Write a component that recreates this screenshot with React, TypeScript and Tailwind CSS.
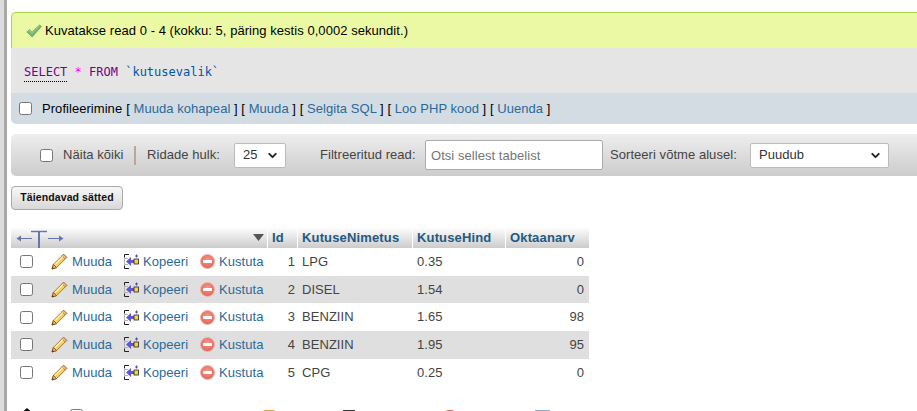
import type { ReactNode } from 'react';
import { ChevronDown } from 'lucide-react';

const rows = [
  { id: 1, name: 'LPG', price: '0.35', octane: 0 },
  { id: 2, name: 'DISEL', price: '1.54', octane: 0 },
  { id: 3, name: 'BENZIIN', price: '1.65', octane: 98 },
  { id: 4, name: 'BENZIIN', price: '1.95', octane: 95 },
  { id: 5, name: 'CPG', price: '0.25', octane: 0 },
];

function Check() {
  return (
    <svg width="16" height="14" viewBox="0 0 16 14" className="shrink-0">
      <path d="M0.8 8l2.6-2.4 2.6 2.6L13.4 1l2 1.4L6.2 13z" fill="#74b56f" stroke="#5a9a58" strokeWidth="0.6" />
      <path d="M1.8 8l1.6-1.4 2.6 3L13.4 2" fill="none" stroke="#a5d6a0" strokeWidth="0.8" />
    </svg>
  );
}

function Pencil() {
  return (
    <svg width="17" height="17" viewBox="0 0 17 17" className="shrink-0">
      <path d="M12.6 1.2l3.2 3.2L5.6 14.6 1 16l1.4-4.6z" fill="#f5cf5b" stroke="#a8792c" strokeWidth="1" />
      <path d="M12.6 1.2l3.2 3.2-1.6 1.6-3.2-3.2z" fill="#e9b7a0" stroke="#a8792c" strokeWidth="0.8" />
      <path d="M4 11.5L12 3.5" stroke="#fdf1bd" strokeWidth="1.2" />
      <path d="M1 16l1.4-4.6 3.2 3.2z" fill="#e2b98a" stroke="#7a4a1c" strokeWidth="0.8" />
      <path d="M1 16l.6-2 1.4 1.4z" fill="#4a2c10" />
    </svg>
  );
}

function Copy() {
  return (
    <svg width="15" height="17" viewBox="0 0 15 17" className="shrink-0">
      <path d="M5 1.5H.5v3M.5 12.5v3H5" fill="none" stroke="#222" strokeWidth="1" />
      <path d="M.5 5v7M1 5.5h3M1 11.5h3" fill="none" stroke="#b5b5b5" strokeWidth="1" />
      <path d="M2 8.5L7 4v3h3v3H7v3z" fill="#5f55d8" />
      <rect x="10" y="6" width="4.5" height="5" fill="#f6d24a" stroke="#222" strokeWidth="0.8" />
      <path d="M12.5 1.5v3M11 3h3" stroke="#4a4ac8" strokeWidth="1" />
    </svg>
  );
}

function Stop() {
  return (
    <svg width="15" height="15" viewBox="0 0 15 15" className="shrink-0">
      <defs>
        <radialGradient id="stop-fill" cx="50%" cy="40%" r="60%">
          <stop offset="0%" stopColor="#f49a8c" />
          <stop offset="100%" stopColor="#e0625a" />
        </radialGradient>
      </defs>
      <circle cx="7.5" cy="7.5" r="7" fill="url(#stop-fill)" stroke="#efb3aa" strokeWidth="1" />
      <rect x="3" y="6" width="9" height="3" rx="0.5" fill="#fff" />
    </svg>
  );
}

function SizeArrows() {
  return (
    <svg width="52" height="20" viewBox="0 0 52 20">
      <g fill="#6a74ac" stroke="#6a74ac">
        <path d="M5 10.5h11" fill="none" />
        <path d="M0.5 10.5L5 7.5v6z" stroke="none" />
        <path d="M15 3.5h16" fill="none" strokeWidth="1.5" />
        <path d="M23 3.5V20" fill="none" strokeWidth="2" />
        <path d="M32 10.5h11" fill="none" />
        <path d="M47.5 10.5L43 7.5v6z" stroke="none" />
      </g>
    </svg>
  );
}

function Box() {
  return <span className="block h-[13px] w-[13px] shrink-0 rounded-[2.5px] border border-[#767676] bg-white" />;
}

function Link({ children }: { children: ReactNode }) {
  return <span className="text-[#2a6a99]">{children}</span>;
}

function SelectBox({ label, className }: { label: string; className: string }) {
  return (
    <div className={`flex h-[25px] items-center justify-between rounded-[2px] border border-[#bbb] bg-white pl-2 pr-[6px] text-[#333] ${className}`}>
      {label}
      <ChevronDown size={13} strokeWidth={3.5} className="text-[#222]" />
    </div>
  );
}

function Th({ children, className }: { children?: ReactNode; className: string }) {
  return (
    <div className={`flex h-[21px] items-center border-r border-white bg-gradient-to-b from-white to-[#cccccc] pl-1 font-bold tracking-[0.15px] text-[#235a81] ${className}`}>
      {children}
    </div>
  );
}

export default function App() {
  return (
    <div className="flex h-[411px] w-[917px] overflow-hidden whitespace-nowrap bg-white font-['Liberation_Sans',Arial,sans-serif] text-[13px] tracking-[0.05px] text-black">
      <div className="h-full w-[7px] shrink-0 border-r-[3px] border-[#a9a9a9] bg-[#dcdcdc]" />
      <div className="ml-1 min-w-0 flex-1 pt-3">
        <div className="flex h-9 items-center gap-[3px] rounded-tl-[5px] border-t border-l border-[#a6d64a] bg-[#ebf8a4] pl-[14px]">
          <Check />
          <span>Kuvatakse read 0 - 4 (kokku: 5, päring kestis 0,0002 sekundit.)</span>
        </div>

        <div className="flex h-[45px] items-center whitespace-pre bg-[#e5e5e5] pl-[13px] pt-[3px] font-['DejaVu_Sans_Mono',monospace] text-[12px] tracking-normal">
          <span className="border-b border-dotted border-black text-[#708]">SELECT</span>
          <span className="text-[#f0f]"> * </span>
          <span className="text-[#708]">FROM</span>
          <span className="text-[#05a]"> `kutusevalik`</span>
        </div>

        <div className="flex h-[31px] items-center rounded-bl-[5px] bg-[#d3dce3] pl-2">
          <Box />
          <span className="ml-[10px]">Profileerimine</span>
          <span className="ml-1">
            [ <Link>Muuda kohapeal</Link> ] [ <Link>Muuda</Link> ] [ <Link>Selgita SQL</Link> ] [ <Link>Loo PHP kood</Link> ] [ <Link>Uuenda</Link> ]
          </span>
        </div>

        <div className="mt-[10px] flex h-[42px] items-center rounded-l-[5px] bg-gradient-to-b from-[#eeeeee] to-[#cccccc] text-[#444]">
          <span className="ml-[29px]"><Box /></span>
          <span className="ml-[10px] w-[60px]">Näita kõiki</span>
          <span className="ml-[11px] h-[19px] w-[2px] bg-[#b9a898]" />
          <span className="ml-[11px] w-[72px]">Ridade hulk:</span>
          <SelectBox label="25" className="ml-[15px] w-[52px]" />
          <span className="ml-[34px] w-[95px]">Filtreeritud read:</span>
          <input
            readOnly
            placeholder="Otsi sellest tabelist"
            className="ml-[10px] h-[30px] w-[178px] rounded-[2px] border border-[#aaa] bg-white px-[5px] text-[13px] text-[#444] outline-none placeholder:text-[#757575]"
          />
          <span className="ml-[7px] w-[126px]">Sorteeri võtme alusel:</span>
          <SelectBox label="Puudub" className="ml-[14px] w-[139px]" />
        </div>

        <button
          type="button"
          className="mt-[10px] block h-6 w-[112px] rounded-[4px] border border-[#aaa] bg-gradient-to-b from-[#f8f8f8] to-[#d8d8d8] text-[10.5px] font-bold tracking-[0.1px] text-[#111]"
        >
          Täiendavad sätted
        </button>

        <div className="mt-[17px] w-[578px]">
          <div className="flex">
            <Th className="w-[257px] justify-between !pl-[5px] !pr-[3px]">
              <SizeArrows />
              <svg width="11" height="7" viewBox="0 0 11 7">
                <path d="M0 0h11L5.5 7z" fill="#555" />
              </svg>
            </Th>
            <Th className="w-[30px]">Id</Th>
            <Th className="w-[115px]">KutuseNimetus</Th>
            <Th className="w-[93px]">KutuseHind</Th>
            <Th className="w-[83px] border-r-0">Oktaanarv</Th>
          </div>
          {rows.map((row, i) => (
            <div key={row.id} className={`flex h-[27.7px] items-center text-[#444] ${i % 2 === 1 ? 'bg-[#dfdfdf]' : 'bg-white'}`}>
              <span className="ml-[9px]"><Box /></span>
              <span className="ml-[18px]"><Pencil /></span>
              <span className="ml-1 w-[52px] text-[#2a6a99]">Muuda</span>
              <Copy />
              <span className="ml-1 w-[57px] text-[#2a6a99]">Kopeeri</span>
              <Stop />
              <span className="ml-1 w-[48px] text-[#2a6a99]">Kustuta</span>
              <span className="w-[28px] text-right">{row.id}</span>
              <span className="ml-[7px] w-[115px]">{row.name}</span>
              <span className="w-[60px]">{row.price}</span>
              <span className="w-[107px] text-right">{row.octane}</span>
            </div>
          ))}
        </div>

        <div className="mt-[21px] flex h-4 items-start leading-none text-[#2a6a99]">
          <svg width="14" height="6" viewBox="0 0 14 6" className="ml-[9px] mt-[1px] shrink-0">
            <path d="M7 0l7 6H0z" fill="#111" />
          </svg>
          <span className="ml-[36px] mt-[2px]"><Box /></span>
          <span className="ml-[10px] mt-[2px] w-[70px]">Vali kõik</span>
          <span className="ml-[10px] mt-[2px] w-[90px] text-[#444]">Valitud:</span>
          <span className="mt-[3px] h-3 w-3 rounded-[2px] bg-[#e0a030]" />
          <span className="ml-[3px] mt-[2px] w-[65px]">Muuda</span>
          <span className="mt-[3px] h-3 w-3 bg-[#333]" />
          <span className="ml-[8px] mt-[2px] w-[80px]">Kopeeri</span>
          <span className="mt-[3px] h-3 w-[14px] rounded-full bg-[#e2695f]" />
          <span className="ml-[3px] mt-[2px] w-[75px]">Kustuta</span>
          <span className="mt-[3px] h-3 w-[15px] bg-[#8aa8d8]" />
          <span className="ml-[7px] mt-[2px]">Ekspordi</span>
        </div>
      </div>
    </div>
  );
}
